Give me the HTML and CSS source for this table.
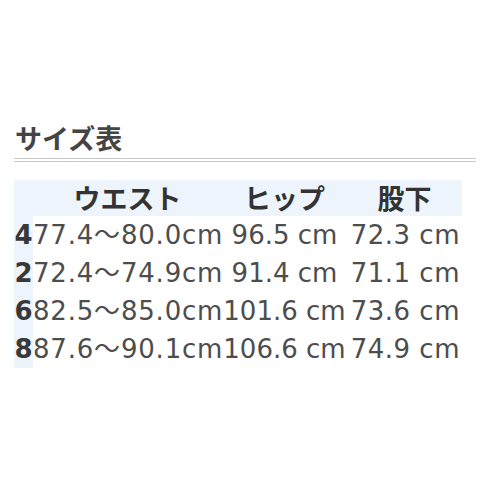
FILE: index.html
```html
<!DOCTYPE html>
<html lang="ja">
<head>
<meta charset="utf-8">
<link rel="stylesheet" href="styles.css">
</head>
<body>
<div class="page">
  <h2 class="title">サイズ表</h2>
  <table class="size-table">
    <thead>
      <tr>
        <th class="c-size"></th>
        <th class="c-waist">ウエスト</th>
        <th class="c-hip">ヒップ</th>
        <th class="c-inseam">股下</th>
      </tr>
    </thead>
    <tbody>
      <tr><th class="c-size">4</th><td class="c-waist">77.4～80.0cm</td><td class="c-hip">96.5 cm</td><td class="c-inseam">72.3 cm</td></tr>
      <tr><th class="c-size">2</th><td class="c-waist">72.4～74.9cm</td><td class="c-hip">91.4 cm</td><td class="c-inseam">71.1 cm</td></tr>
      <tr><th class="c-size">6</th><td class="c-waist">82.5～85.0cm</td><td class="c-hip">101.6 cm</td><td class="c-inseam">73.6 cm</td></tr>
      <tr><th class="c-size">8</th><td class="c-waist">87.6～90.1cm</td><td class="c-hip">106.6 cm</td><td class="c-inseam">74.9 cm</td></tr>
    </tbody>
  </table>
</div>
</body>
</html>
```
FILE: styles.css
```css
html, body {
  margin: 0;
  padding: 0;
  background: #ffffff;
}
.page {
  padding: 0 4px 0 14px;
  font-family: "DejaVu Sans", "Noto Sans CJK JP", sans-serif;
  color: #4d4d4d;
}
.title {
  margin: 122px 0 0 0;
  padding: 0 0 4px 1px;
  font-family: "Noto Sans CJK JP", sans-serif;
  font-size: 27px;
  line-height: 32px;
  font-weight: 700;
  color: #444;
  border-bottom: 4px double #c8c8c8;
}
.size-table {
  margin-top: 18px;
  border-collapse: collapse;
  border-spacing: 0;
  table-layout: fixed;
  width: 448px;
}
.size-table th,
.size-table td {
  padding: 0;
  white-space: nowrap;
  text-align: center;
  vertical-align: middle;
}
.size-table thead th {
  height: 36px;
  line-height: 36px;
  background: #edf4fc;
  font-family: "Noto Sans CJK JP", sans-serif;
  font-size: 27px;
  font-weight: 700;
  color: #333;
}
.size-table tbody td,
.size-table tbody th {
  height: 38px;
  line-height: 30px;
  font-size: 26px;
  font-weight: 400;
}
.size-table tbody th.c-size {
  background: #edf4fc;
  font-weight: 700;
  color: #383838;
}
.c-size { width: 19px; }
.c-waist { width: 189px; }
.size-table tbody td.c-waist {
  text-align: left;
  letter-spacing: 0.8px;
}
.c-hip { width: 125px; }
.c-inseam { width: 115px; }
.size-table tbody td.c-inseam {
  text-align: right;
  padding-right: 2px;
  letter-spacing: 0.5px;
}
```
